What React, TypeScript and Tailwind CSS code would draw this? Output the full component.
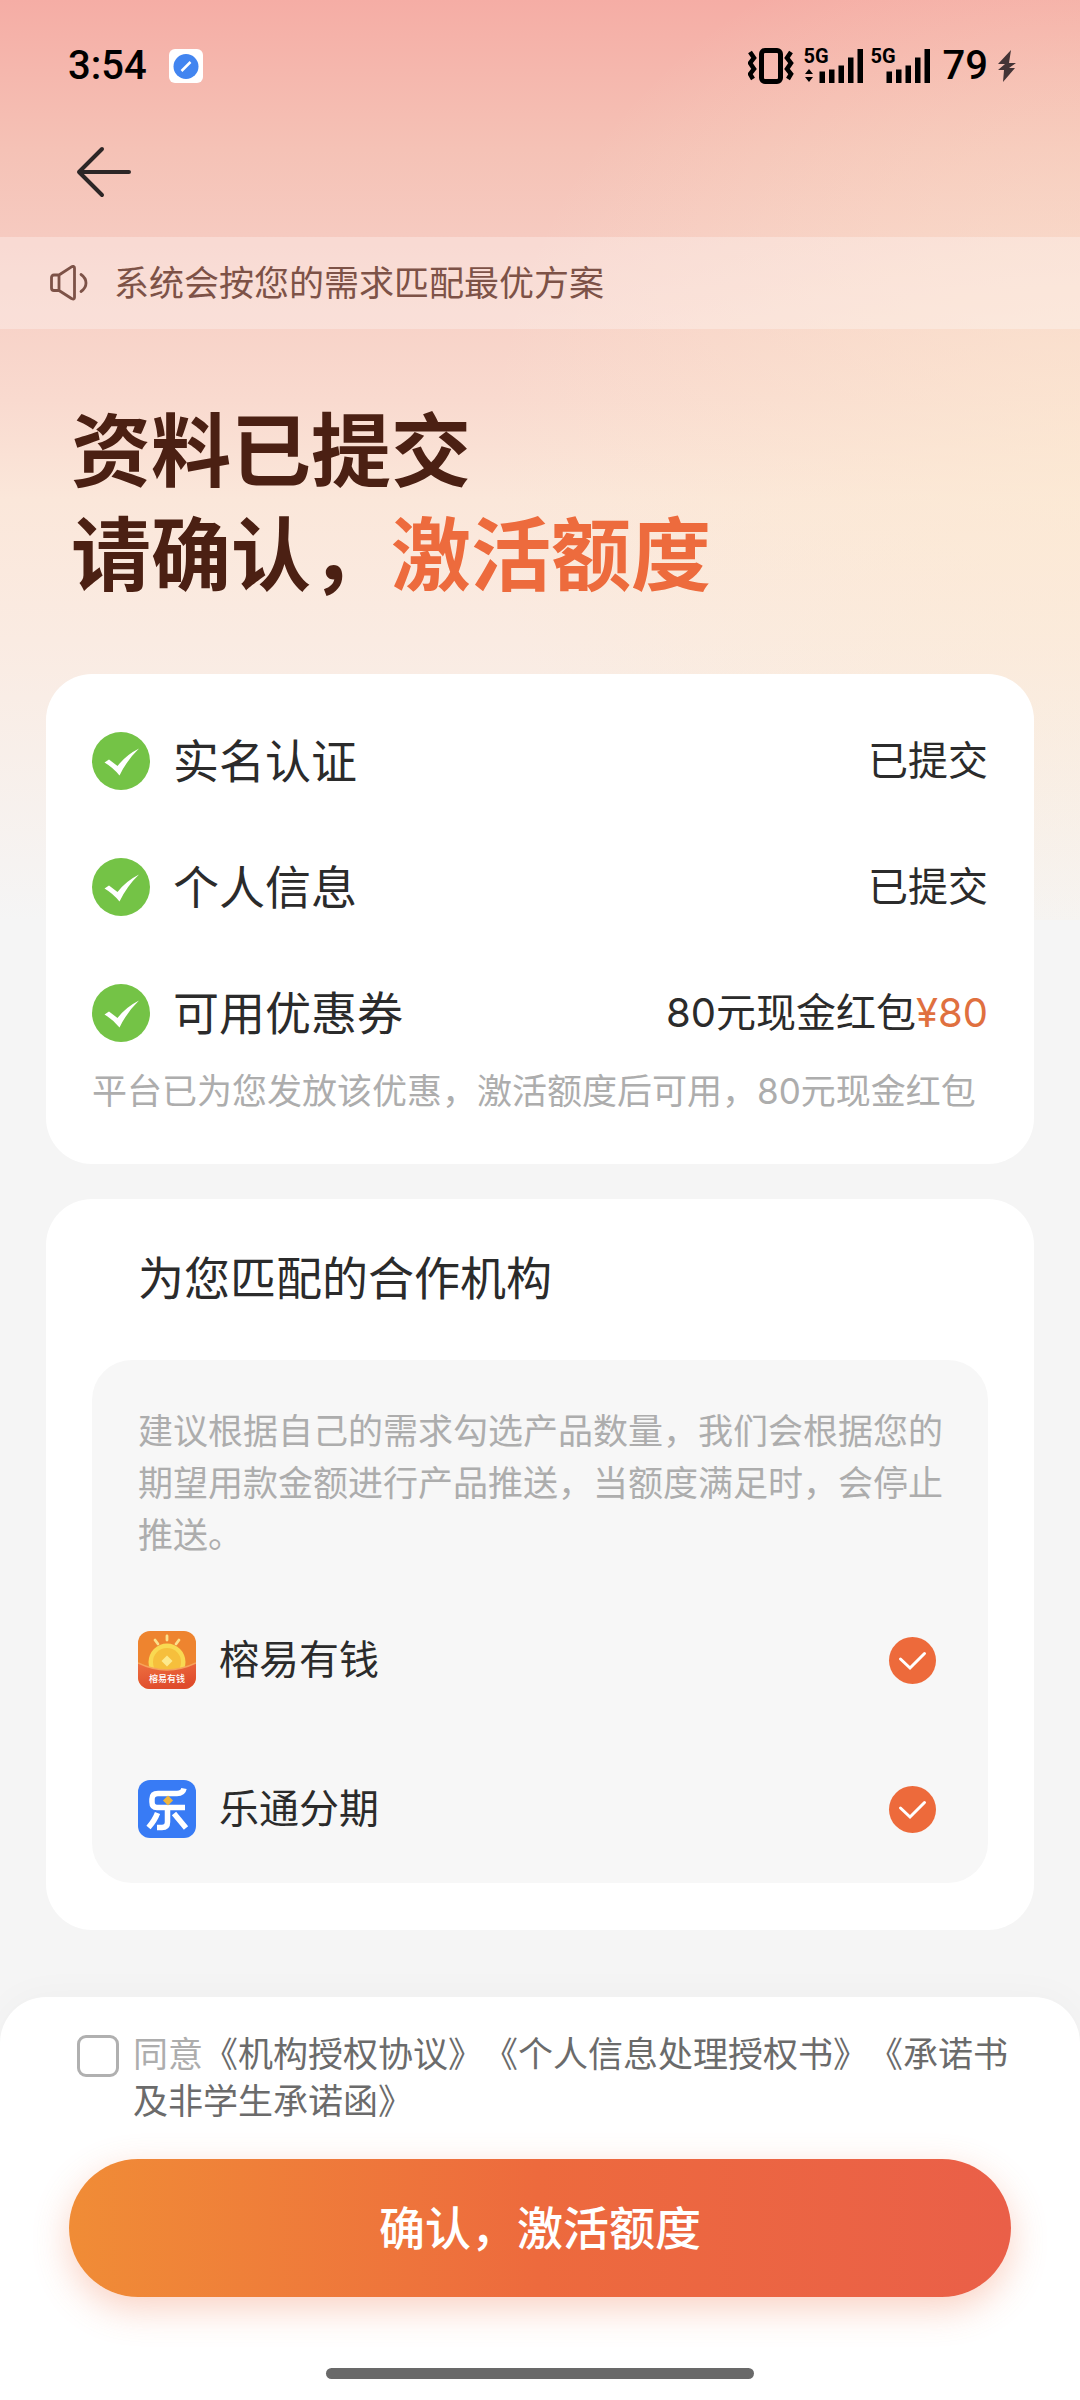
import React, { useState } from "react";

const steps = [
  { label: "实名认证", value: "已提交" },
  { label: "个人信息", value: "已提交" },
  { label: "可用优惠券", value: "80元现金红包", amount: "¥80" },
];

function VibrateIcon() {
  return (
    <svg width="46" height="36" viewBox="0 0 46 36" fill="none" stroke="#000" aria-hidden="true">
      <rect x="13.500" y="2.500" width="19" height="31" rx="3.500" strokeWidth="5" />
      <path d="M2.500 4l4 6-4 5 4 6-4 5 3 5M43.500 4l-4 6 4 5-4 6 4 5-3 5" strokeWidth="4.500" transform="translate(-0.500 0)" />
    </svg>
  );
}

function Signal({ arrows }: { arrows?: boolean }) {
  return (
    <span className="relative block h-9 w-[60px]">
      <svg width="60" height="36" viewBox="0 0 60 36" aria-hidden="true">
        {arrows && <path d="M1 26l4-5 4 5zM1 29h8l-4 5z" />}
        <path d="M15.500 23.500h5.500V35h-5.500zM25 21.500h5.500V35H25zM34.500 17.500H40V35h-5.500zM44 9.500h5.500V35H44zM53.500 1H59v34h-5.500z" />
      </svg>
      <span className="absolute left-0 top-0 text-[20px] font-bold leading-4">5G</span>
    </span>
  );
}

function BoltIcon() {
  return (
    <svg width="18" height="34" viewBox="0 0 18 34" fill="#433436" aria-hidden="true">
      <path d="M13 1L0 15h7L0 21h6L5 33l12-14h-6l7-5h-7z" />
    </svg>
  );
}

function BrowserIcon() {
  return (
    <svg width="34" height="34" viewBox="0 0 34 34" aria-hidden="true">
      <rect width="34" height="34" rx="6" fill="#fff" />
      <circle cx="17" cy="17.500" r="12.500" fill="#4285f0" />
      <path d="M12.500 22l9-9" stroke="#fff" strokeWidth="2.500" />
    </svg>
  );
}

function SpeakerIcon() {
  return (
    <svg width="38" height="36" viewBox="0 0 38 36" fill="none" stroke="#7d5247" strokeWidth="2.800" strokeLinejoin="round" strokeLinecap="round" aria-hidden="true">
      <path d="M9 10H4Q1.500 10 1.500 12.500V23Q1.500 25.500 4 25.500H9zM9 10L21.500 1.800Q24.500 0.500 24.500 3V32.500Q24.500 35 21.500 33.500L9 25.500" />
      <path d="M31 9.500Q36 13 36 18T31 26.500" />
    </svg>
  );
}

function GreenCheck() {
  return (
    <svg width="58" height="58" viewBox="0 0 58 58" className="shrink-0" aria-hidden="true">
      <circle cx="29" cy="29" r="29" fill="#74c346" />
      <path d="M12.500 30.500L17 27.500L25.500 34Q34 23 47 16.500Q35 28 27.500 43.500Q21 35.500 12.500 30.500z" fill="#fff" />
    </svg>
  );
}

function SunLogo() {
  return (
    <span className="relative block size-[58px] overflow-hidden rounded-[12px]">
      <svg width="58" height="58" viewBox="0 0 58 58" aria-hidden="true">
        <defs>
          <linearGradient id="sunLow" x1="0" y1="0" x2="0.400" y2="1">
            <stop offset="0" stopColor="#ee7040" />
            <stop offset="1" stopColor="#df4b2c" />
          </linearGradient>
        </defs>
        <rect width="58" height="58" fill="#ee842f" />
        <circle cx="29" cy="31" r="18.500" fill="#f9d952" />
        <circle cx="29" cy="31" r="14" fill="#f6bf3c" />
        <path d="M29 24.500l5.500 5.500-5.500 5.500-5.500-5.500z" fill="#fdea8c" />
        <path d="M29 5v4M17 9l3 4M41 9l-3 4" stroke="#fbe08a" strokeWidth="2.800" strokeLinecap="round" />
        <path d="M0 32Q29 46 58 32V58H0z" fill="url(#sunLow)" />
        <path d="M0 32Q29 46 58 32" fill="none" stroke="#f7a35a" strokeWidth="1.500" />
      </svg>
      <span className="absolute inset-x-0 bottom-1 text-center text-[9px] font-medium leading-3 text-white">榕易有钱</span>
    </span>
  );
}

function LeLogo() {
  return (
    <svg width="58" height="58" viewBox="0 0 58 58" aria-hidden="true">
      <rect width="58" height="58" rx="12" fill="#387bf5" />
      <g fill="none" stroke="#fff" strokeWidth="5.500">
        <path d="M46 8.500Q45 13.500 39 13.500H20Q14 13.500 14 19V22Q14 27.500 19 27.500H47" />
        <path d="M29.500 27V42Q29.500 47.500 24 47.500H19" />
        <path d="M19.500 33Q17 40 10.500 47.500M36 33.500L48 48" />
      </g>
      <path d="M30 15.500l5 5-5 5-5-5z" fill="#f0b53c" />
    </svg>
  );
}

const partners = [
  { name: "榕易有钱", Logo: SunLogo },
  { name: "乐通分期", Logo: LeLogo },
];

export default function App() {
  const [agreed, setAgreed] = useState(false);
  return (
    <div className="flex min-h-screen flex-col bg-[#f5f5f5] font-['Inter','Noto_Sans_CJK_SC',sans-serif] text-[#2b2b2b] [text-spacing-trim:space-all]">
      <div className="grow bg-[radial-gradient(ellipse_55%_60%_at_100%_50%,rgba(252,234,210,0.65),rgba(252,234,210,0)),linear-gradient(to_bottom,#f5ada5_0,#f5c2b6_150px,#f6cac0_235px,#f9dacf_400px,#fbe7da_500px,#faebe2_640px,#f5f5f5_920px)] bg-[length:100%_920px,100%_100%] bg-no-repeat">
        <header className="flex h-[132px] items-center justify-between pl-[68px] pr-16 font-['Roboto',sans-serif] text-[40px] font-medium leading-[48px] text-black">
          <div className="flex items-center gap-[22px]">
            <span>3:54</span>
            <BrowserIcon />
          </div>
          <div className="flex items-center">
            <VibrateIcon />
            <span className="ml-2.5"><Signal arrows /></span>
            <span className="ml-[7px]"><Signal /></span>
            <span className="ml-3">79</span>
            <span className="ml-2.5"><BoltIcon /></span>
          </div>
        </header>

        <nav className="flex h-[105px] items-start pl-[76px] pt-3">
          <button type="button" aria-label="返回">
            <svg width="56" height="56" viewBox="0 0 56 56" fill="none" stroke="#2c2626" strokeWidth="4" strokeLinecap="round" strokeLinejoin="round">
              <path d="M26 5L3 28l23 23M3 28h50" />
            </svg>
          </button>
        </nav>

        <div className="flex h-[92px] items-center gap-[26px] bg-white/30 px-[50px] text-[35px] leading-[52px] text-[#7d5247]">
          <SpeakerIcon />
          <p>系统会按您的需求匹配最优方案</p>
        </div>

        <h1 className="px-[71px] pb-[67px] pt-[70px] text-[80px] font-bold leading-[104px] text-[#4b2013]">
          资料已提交
          <br />
          请确认，<span className="text-[#ed6b3d]">激活额度</span>
        </h1>

        <main className="flex flex-col gap-[35px] px-[46px] pb-[67px]">
          <section className="rounded-[46px] bg-white px-[46px] pb-[47px] pt-[58px]">
            <ul className="flex flex-col gap-[68px]">
              {steps.map((s) => (
                <li key={s.label} className="flex h-[58px] items-center">
                  <GreenCheck />
                  <span className="ml-[23px] text-[46px]">{s.label}</span>
                  <span className="ml-auto text-[40px]">
                    {s.value}
                    {s.amount && <span className="text-[#e0703f]">{s.amount}</span>}
                  </span>
                </li>
              ))}
            </ul>
            <p className="mt-[23px] text-[35px] leading-[52px] text-[#adadad]">
              平台已为您发放该优惠，激活额度后可用，80元现金红包
            </p>
          </section>

          <section className="rounded-[46px] bg-white px-[46px] pb-[47px] pt-[46px]">
            <h2 className="px-[46px] text-[46px] leading-[66px]">为您匹配的合作机构</h2>
            <div className="mt-[49px] rounded-[40px] bg-[#f7f7f7] pb-[45px] pl-[46px] pr-11 pt-[45px]">
              <p className="text-[35px] leading-[52px] text-[#adadad]">
                建议根据自己的需求勾选产品数量，我们会根据您的期望用款金额进行产品推送，当额度满足时，会停止推送。
              </p>
              <ul className="mt-[70px] flex flex-col gap-[91px]">
                {partners.map(({ name, Logo }) => (
                  <li key={name}>
                    <label className="flex h-[58px] items-center">
                      <Logo />
                      <span className="ml-[23px] text-[40px]">{name}</span>
                      <span className="relative ml-auto mr-2 block size-[47px]">
                        <input type="checkbox" defaultChecked className="peer block size-[47px] appearance-none rounded-full border-2 border-[#c8c8c8] checked:border-0 checked:bg-[#ed6a3b]" />
                        <svg viewBox="0 0 47 47" className="pointer-events-none absolute inset-0 hidden peer-checked:block" fill="none" stroke="#fff" strokeWidth="3" strokeLinecap="round" aria-hidden="true">
                          <path d="M11.500 22L21 31L35.500 16.500" />
                        </svg>
                      </span>
                    </label>
                  </li>
                ))}
              </ul>
            </div>
          </section>
        </main>
      </div>

      <footer className="rounded-t-[46px] bg-white px-[69px] pb-[21px] pt-[34px] shadow-[0_0_40px_rgba(0,0,0,0.03)]">
        <div className="flex items-start gap-3.5 pl-2 text-[35px] leading-[47px] text-[#6b6b6b]">
          <input
            id="agree"
            type="checkbox"
            checked={agreed}
            onChange={(e) => setAgreed(e.target.checked)}
            className="mt-1 size-[42px] shrink-0 appearance-none rounded-[9px] border-[3px] border-[#b0b0b0] bg-white checked:bg-[#ed6a3b]"
          />
          <p>
            <label htmlFor="agree" className="text-[#adadad]">同意</label>
            <a href="#auth">《机构授权协议》</a>
            <a href="#privacy">《个人信息处理授权书》</a>
            <a href="#promise">《承诺书及非学生承诺函》</a>
          </p>
        </div>
        <button type="button" className="mt-[34px] flex h-[138px] w-full items-center justify-center rounded-full bg-linear-to-r from-[#f08c36] via-[#ed6a3d] to-[#ea5f48] text-[46px] font-medium text-white shadow-[0_12px_36px_rgba(237,106,61,0.3)]">
          确认，激活额度
        </button>
        <div className="mx-auto mt-[71px] h-[11px] w-[428px] rounded-full bg-[#696969]" />
      </footer>
    </div>
  );
}
